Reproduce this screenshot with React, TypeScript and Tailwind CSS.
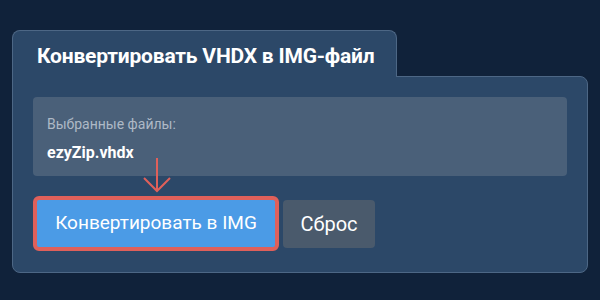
import React from 'react';

const App: React.FC = () => {
  return (
    <div
      className="w-[600px] h-[300px] bg-[#10223a] pt-[30px] px-3"
      style={{ fontFamily: 'Roboto, "Noto Sans", sans-serif' }}
    >
      <div className="relative z-10 w-[385px] h-[47px] -mb-px rounded-t-lg border border-b-0 border-[#4d6785] bg-[#2c4868] pl-6 pt-[10px]">
        <h2 className="text-[21px] font-bold text-white tracking-[-0.2px]">
          Конвертировать VHDX в IMG-файл
        </h2>
      </div>
      <div className="h-[197px] rounded-lg rounded-tl-none border border-[#4d6785] bg-[#2c4868] px-5 pt-5">
        <div className="h-[79px] rounded bg-[#4a6079] px-[14px] pt-[17px]">
          <div className="text-[14px] text-[#aeb9c6]">Выбранные файлы:</div>
          <div className="mt-[6px] text-[16px] font-bold text-white">ezyZip.vhdx</div>
        </div>
        <div className="flex items-center gap-1">
          <div className="relative">
            <svg
              className="absolute left-[109px] -top-[18px]"
              width="30"
              height="35"
              viewBox="0 0 30 35"
              fill="none"
              stroke="#e0605a"
              strokeWidth="2"
            >
              <path d="M15 0 V33" />
              <path d="M2 20 L15 33 L28 20" />
            </svg>
            <div className="mt-5 rounded-md border-4 border-[#e0605a] bg-[#4b9be6] w-[246px] h-[55px] flex items-center justify-center">
              <span className="text-[19px] text-white">Конвертировать в IMG</span>
            </div>
          </div>
          <button className="mt-5 w-[92px] h-[48px] rounded bg-[#4a5a6c] text-[20px] text-white">
            Сброс
          </button>
        </div>
      </div>
    </div>
  );
};

export default App;
